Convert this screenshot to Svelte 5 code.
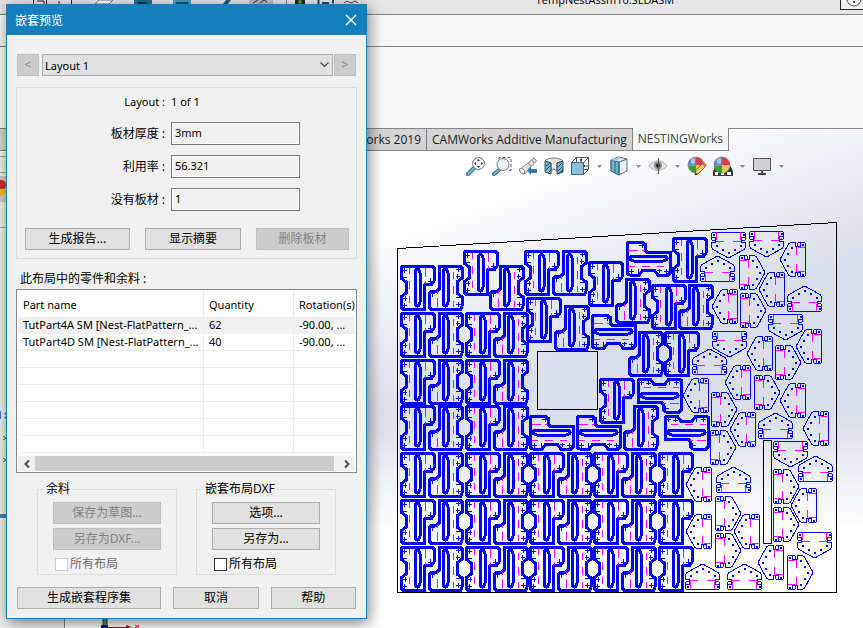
<script lang="ts">
    type Placement = { x: number, y: number, turn: number }

    let selected: string = $state('Layout 1')
    let allScrap: boolean = $state(false)
    let allDxf: boolean = $state(false)

    const parts = [
        { name: 'TutPart4A SM [Nest-FlatPattern_...', quantity: 62, rotation: '-90.00, ...' },
        { name: 'TutPart4D SM [Nest-FlatPattern_...', quantity: 40, rotation: '-90.00, ...' }
    ]
    const emptyRows = [1, 2, 3, 4, 5, 6]

    const place = (list: number[][]): Placement[] =>
        list.map(([x, y, turn]) => ({ x, y, turn }))

    // regular columns of brackets, two interlocked pieces per column
    const brackets: Placement[] = []
    for (const y of [312, 359, 405]) {
        for (const x of [400, 465]) {
            brackets.push({ x, y, turn: 0 }, { x: x + 28, y, turn: 180 })
        }
    }
    for (const y of [452, 499, 546]) {
        for (const x of [400, 465, 529, 593]) {
            brackets.push({ x, y, turn: 0 }, { x: x + 28, y, turn: 180 })
        }
        brackets.push({ x: 658, y, turn: 0 })
    }
    // the loose ones
    brackets.push(...place([
        [400, 265, 0], [428, 265, 180], [463, 250, 0], [489, 265, 180],
        [524, 250, 0], [552, 250, 180], [588, 261, 0], [615, 278, 180],
        [651, 284, 0], [678, 284, 180], [672, 237, 0], [526, 297, 0],
        [554, 305, 180], [591, 314, -90], [626, 241, -90], [628, 331, 180],
        [664, 331, 0], [599, 378, 0], [637, 378, 90], [623, 405, 180],
        [529, 415, -90], [576, 415, -90], [664, 415, 90]
    ]))

    const gussets: Placement[] = place([
        [711, 232, 0], [749, 231, 0], [768, 314, 0], [712, 331, 0],
        [773, 441, 0], [797, 532, 0],
        [700, 256, 180], [787, 286, 180], [692, 349, 180], [758, 413, 180],
        [798, 456, 180], [716, 467, 180], [685, 564, 180], [727, 564, 180],
        [780, 242, 90], [759, 272, 90], [712, 289, 90], [796, 329, 90],
        [747, 336, 90], [725, 365, 90], [683, 378, 90], [780, 383, 90],
        [730, 412, 90], [803, 411, 90], [686, 467, 90], [734, 514, 90],
        [686, 514, 90], [791, 488, 90], [758, 545, 90],
        [739, 255, -90], [740, 293, -90], [775, 345, -90], [754, 375, -90],
        [711, 392, -90], [710, 430, -90], [715, 496, -90], [715, 533, -90],
        [773, 469, -90], [773, 507, -90], [787, 555, -90]
    ])

    // x and y are the corner of the piece after it has been turned
    const move = (p: Placement, w: number, h: number) => {
        let dx = 0
        let dy = 0
        if (p.turn === 180) {
            dx = w
            dy = h
        }
        if (p.turn === 90) dx = h
        if (p.turn === -90) dy = w
        return `translate(${p.x + dx} ${p.y + dy}) rotate(${p.turn})`
    }
</script>

<svelte:head>
    <title>NESTINGWorks</title>
</svelte:head>

{#snippet arrow()}
    <button class="more" aria-label="more">
        <svg width="5" height="3" viewBox="0 0 5 3"><path d="M0 0h5L2.500 3z" fill="#8b8b8b" /></svg>
    </button>
{/snippet}

{#snippet ball()}
    <circle cx="9" cy="9" r="8" fill="#e9edf5" />
    <path d="M9 9V1a8 8 0 0 0-8 8c2 1 5 1 8 0z" fill="#5b8fd8" />
    <path d="M9 1a8 8 0 0 1 8 7.500c-2 1.500-5 1.500-8 .5z" fill="#dc3f43" />
    <path d="M1 9c2 1 5 1 8 0v8a8 8 0 0 1-8-8z" fill="#35a02c" />
    <path d="M9 9c3 1 6 1 8-.5A8 8 0 0 1 9 17z" fill="#f0c85a" />
    <ellipse cx="6" cy="5" rx="2" ry="3" fill="#c9dcf5" opacity=".7" />
    <circle cx="9" cy="9" r="8" fill="none" stroke="#6b7280" stroke-width=".6" />
{/snippet}

<main>
    <header class="titlebar">
        <svg class="tools" width="340" height="5" viewBox="30 0 340 5" aria-hidden="true">
            <path d="M33.500 0v4M46.500 0v4M37 1h7v3M59 4V1M71.500 0v4" stroke="#222" fill="none" />
            <path d="M95 4l4-4h14l-4 4z" fill="#fff" stroke="#777" />
            <path d="M134 0h18v4h-18z" fill="#1d6f96" />
            <path d="M138 2h9v2h-9z" fill="#183848" />
            <path d="M173 0h18v4h-18z" fill="#3c9cc4" />
            <path d="M176 2h12v2h-12z" fill="#165272" />
            <path d="M223 4l3-4h5l-3 4z" fill="#1d5f86" />
            <path d="M249 0h24v4h-24z" fill="#bdbdbd" />
            <path d="M253 3l5-3M260 3l4-3 3 2" stroke="#333" fill="none" />
            <path d="M286.500 0v4" stroke="#888" />
            <path d="M295 0h10v4h-10z" fill="#252525" />
            <circle cx="300" cy="2" r="2" fill="#39a935" />
            <path d="M318.500 0v4M333 3.500V0M322 3h7" stroke="#1b4c66" stroke-width="2" />
            <path d="M344 3l3-2 4 2 4-2 3 2" stroke="#444" fill="none" />
        </svg>
        <h1>TempNestAssm10.SLDASM</h1>
        <button class="help" aria-label="Help">
            <svg width="22" height="9" viewBox="0 0 22 9">
                <circle cx="13" cy="-1" r="7" fill="#ececec" stroke="#555" />
                <path d="M12 1h2v2h-2z" fill="#1b6b95" />
            </svg>
        </button>
    </header>
    <div class="band"></div>
    <div class="ribbon"></div>

    <section class="workspace">
        <nav class="tabs">
            <a class="first" href="#camworks">CAMWorks 2019</a>
            <a href="#additive">CAMWorks Additive Manufacturing</a>
            <a class="active" href="#nesting">NESTINGWorks</a>
        </nav>

        <div class="columns">
            <aside>
                <svg width="7" height="370" viewBox="0 151 7 370" aria-hidden="true">
                    <path d="M0 155.500h7M0 171.500h7M0 226.500h7" stroke="#aaa" />
                    <path d="M0 175h7v26H0z" fill="#cfcfcf" />
                    <circle cx="1" cy="184" r="5" fill="#d22b2b" />
                    <path d="M0 188h6a6 6 0 0 1-6 7z" fill="#ecc51d" />
                    <path d="M0 410h1v8H0z" fill="#2f86c9" />
                    <path d="M5 412h1v1H5zM5 416h1v1H5zM3 435l3 2-3 2M3 457l3 2-3 2" stroke="#555" fill="none" />
                    <path d="M0 513h7v4H0z" fill="#3d83b4" />
                </svg>
            </aside>

            <div class="view">
                <div class="hud">
                    <button aria-label="Zoom to fit">
                        <svg width="20" height="20" viewBox="0 0 20 20">
                            <path d="M2 18l6-6" stroke="#386f8d" stroke-width="4" stroke-linecap="round" />
                            <path d="M2 18l6-6" stroke="#7eb4d0" stroke-width="2" stroke-linecap="round" />
                            <circle cx="12.500" cy="7.500" r="6" fill="#f1f4f6" stroke="#6f7579" />
                            <path d="M12.500 3l1.500 2h-3zM12.500 12l1.500-2h-3zM8 7.500l2-1.500v3zM17 7.500l-2-1.500v3z" fill="#333" />
                        </svg>
                    </button>
                    <button aria-label="Zoom to area">
                        <svg width="20" height="20" viewBox="0 0 20 20">
                            <path d="M7 3V1.500h12v13h-3" fill="none" stroke="#555" stroke-dasharray="3 2" />
                            <path d="M2 18l5-4" stroke="#386f8d" stroke-width="4" stroke-linecap="round" />
                            <path d="M2 18l5-4" stroke="#7eb4d0" stroke-width="2" stroke-linecap="round" />
                            <circle cx="11" cy="8.500" r="6" fill="#e5edef" stroke="#777d80" />
                        </svg>
                    </button>
                    <button aria-label="Previous view">
                        <svg width="20" height="20" viewBox="0 0 20 20">
                            <path d="M2 13l8-6 6-5 2.500 3-5 5-6 7-3 1z" fill="#e2e2e2" stroke="#888" />
                            <path d="M10 7l3 3M14 4l2 3" stroke="#888" />
                            <ellipse cx="4" cy="15" rx="2" ry="3" fill="#fff" stroke="#888" transform="rotate(-40 4 15)" />
                            <path d="M9 14.500l4-4V13h6v4h-6v2z" fill="#2f7fa8" />
                        </svg>
                    </button>
                    <button aria-label="Section view">
                        <svg width="20" height="20" viewBox="0 0 20 20">
                            <path d="M1 5c3-4 14-4 18 0l-6 2v8l-3-2-3 2V7z" fill="#e3e5e7" stroke="#777" />
                            <path d="M1 5l6 2v11l-6-2zM13 7l6-2v11l-6 2z" fill="#7db9d6" stroke="#2b4d60" />
                            <path d="M2 10l4-3M2 14l4-4M4 17l3-3M14 11l4-4M14 15l4-4M15 17l4-3" stroke="#22465b" />
                        </svg>
                    </button>
                    <button aria-label="View orientation">
                        <svg width="20" height="20" viewBox="0 0 20 20">
                            <path d="M1.500 6.500l5-5h12v12l-5 5M6.500 1.500v5M13.500 6.500l5-5M13.500 13.500h5M11 1v5M14 10h5" fill="none" stroke="#555" />
                            <path d="M1.500 6.500h12v12h-12z" fill="#8bbdd6" stroke="#2e6a89" />
                            <path d="M10 3l1 2 1-2M15 9l-1 1 1 1" stroke="#333" fill="none" />
                        </svg>
                    </button>
                    {@render arrow()}
                    <button aria-label="Display style">
                        <svg width="20" height="20" viewBox="0 0 20 20">
                            <path d="M2 4l7-3 9 2v12l-8 4-8-4z" fill="#e8edf0" stroke="#6c7377" />
                            <path d="M2 4l8 2v13l-8-4z" fill="#6fb0d0" stroke="#35647c" />
                            <path d="M2 4l7-3 3 1-5 3z" fill="#9ccbe0" />
                            <path d="M6 5v12M10 6l8-3M10 6v13" stroke="#35647c" />
                        </svg>
                    </button>
                    {@render arrow()}
                    <button aria-label="Hide or show items">
                        <svg width="20" height="20" viewBox="0 0 20 20">
                            <path d="M1 10c5-7 13-7 18 0-5 6-13 6-18 0z" fill="#e4e4e4" stroke="#b2b2b2" />
                            <circle cx="10" cy="9.500" r="4" fill="#8a8a8a" />
                            <circle cx="10" cy="9.500" r="2" fill="#222" />
                            <path d="M10.500 2v16" stroke="#555" />
                        </svg>
                    </button>
                    {@render arrow()}
                    <button aria-label="Edit appearance">
                        <svg width="20" height="20" viewBox="0 0 20 20">
                            {@render ball()}
                            <path d="M8 19l1-5 7-7 3 3-7 7z" fill="#f0cf63" stroke="#6b5425" stroke-width=".8" />
                            <path d="M15 8l2-2 3 3-2 2z" fill="#d9655f" />
                            <path d="M8 19l.6-2.600 2 2z" fill="#222" />
                        </svg>
                    </button>
                    <button aria-label="Apply scene">
                        <svg width="20" height="20" viewBox="0 0 20 20">
                            <path d="M3 9h14l3 6v5H0v-5z" fill="#3c3c3c" />
                            <path d="M2 16h4v3H2zM8 16h4v3H8zM14 16h4v3h-4z" fill="#fff" />
                            {@render ball()}
                            <path d="M5 17h3v2H5zM11 17h3v2h-3z" fill="#3c3c3c" />
                        </svg>
                    </button>
                    {@render arrow()}
                    <button aria-label="View settings">
                        <svg width="20" height="20" viewBox="0 0 20 20">
                            <path d="M1.500 2.500h17v12h-17z" fill="#cfd1d4" stroke="#555" />
                            <path d="M9 15h2v2h3v2H6v-2h3z" fill="#444" />
                        </svg>
                    </button>
                    {@render arrow()}
                </div>

                <svg class="sheet" width="450" height="385" viewBox="390 215 450 385" role="img" aria-label="Sheet layout">
                    <defs>
                        <g id="bracket">
                            <path class="thick" d="M2 1H32L34 3V16L32 19H26L24 21V44H3L1 42V32L6 28V17L1 13V4Z" />
                            <path class="thick" d="M15 8Q15 5 17.500 4Q20 5 20 8V37Q20 40 17.500 41Q15 40 15 37Z" />
                            <path class="fine" d="M2 5.500h5M4.500 3v5M2 12.500h5M3 33.500h4M5.500 31v5M2 40.500h5M4.500 38v5M28 16.500h5M30.500 13v5" />
                            <path class="bend" d="M9.500 3v6M9.500 16v8M9.500 31v7M25.500 3v9M25.500 16v3" />
                        </g>
                        <g id="gusset">
                            <path class="bend" d="M5 9.500h8M22 9.500h8M5.500 1v7M29.500 1v7" />
                            <path class="fine" d="M1.500 .5H33.500L34.500 1.500V7.500L33.500 8.500H30.500V10.500H34.500V15.500L33 17.500L18.500 25.500H16.500L2 17.500L.5 15.500V10.500H4.500V8.500H1.500L.5 7.500V1.500Z" />
                            <path class="fine" d="M.5 5.500h4v3M34.500 5.500h-4v3M2 2.500h1v1h-1zM32 2.500h1v1h-1zM5 13.500h1v1h-1zM29 13.500h1v1h-1zM11 17.500h1v1h-1zM23 17.500h1v1h-1zM17 20.500h1v1h-1z" />
                        </g>
                    </defs>
                    <path class="edge" d="M397.500 248.500L836.500 222.500V592.500H397.500Z" />
                    <path class="edge" d="M537.500 351.500H597.500V409.500H537.500Z" />
                    <path class="edge" d="M763.500 440.500H771.500V543.500H763.500Z" />
                    {#each gussets as piece}
                        <use href="#gusset" transform={move(piece, 35, 26)} />
                    {/each}
                    {#each brackets as piece}
                        <use href="#bracket" transform={move(piece, 35, 45)} />
                    {/each}
                </svg>

                <svg class="triad" width="46" height="12" viewBox="98 616 46 12" aria-hidden="true">
                    <path d="M103 616h4v10h-4z" fill="#4f9a4f" stroke="#164d16" />
                    <path d="M107 627.500h22" stroke="#8d1a1a" />
                    <path d="M126 625l7 2.500h-7z" fill="#8d1a1a" />
                    <path d="M101 625h7v3h-7z" fill="#0a0a9c" />
                    <path d="M135 625l4 3M139 625l-4 3" stroke="#e00" />
                </svg>
            </div>
        </div>
    </section>

    <div class="dialog" role="dialog" aria-labelledby="dialog-title">
        <div class="caption">
            <h2 id="dialog-title">嵌套预览</h2>
            <button aria-label="Close">
                <svg width="12" height="12" viewBox="0 0 12 12"><path d="M1 1l10 10M11 1L1 11" stroke="#fff" stroke-width="1.400" /></svg>
            </button>
        </div>

        <div class="body">
            <div class="pager">
                <button disabled>&lt;</button>
                <div class="combo">
                    <select bind:value={selected} aria-label="Layout">
                        <option>Layout 1</option>
                    </select>
                    <svg width="9" height="6" viewBox="0 0 9 6" aria-hidden="true"><path d="M.5 .5l4 4 4-4" fill="none" stroke="#444" stroke-width="1.200" /></svg>
                </div>
                <button disabled>&gt;</button>
            </div>

            <div class="group">
                <div class="fields">
                    <span class="label">Layout :</span>
                    <span class="count">1 of 1</span>
                    <label class="label" for="thickness">板材厚度 :</label>
                    <input id="thickness" type="text" value="3mm" readonly />
                    <label class="label" for="usage">利用率 :</label>
                    <input id="usage" type="text" value="56.321" readonly />
                    <label class="label" for="sheets">没有板材 :</label>
                    <input id="sheets" type="text" value="1" readonly />
                </div>
                <div class="actions">
                    <button class="report">生成报告...</button>
                    <button class="summary">显示摘要</button>
                    <button class="remove" disabled>删除板材</button>
                </div>
            </div>

            <p class="heading">此布局中的零件和余料 :</p>
            <div class="list">
                <div class="rows">
                    <table>
                        <thead>
                            <tr>
                                <th class="name">Part name</th>
                                <th class="quantity">Quantity</th>
                                <th>Rotation(s)</th>
                            </tr>
                        </thead>
                        <tbody>
                            {#each parts as part, index}
                                <tr class:picked={index === 0}>
                                    <td>{part.name}</td>
                                    <td>{part.quantity}</td>
                                    <td>{part.rotation}</td>
                                </tr>
                            {/each}
                            {#each emptyRows as row}
                                <tr><td></td><td></td><td></td></tr>
                            {/each}
                        </tbody>
                    </table>
                </div>
                <div class="scroll">
                    <button aria-label="Scroll left">
                        <svg width="6" height="8" viewBox="0 0 6 8"><path d="M5 .5L1.500 4 5 7.500" fill="none" stroke="#505050" stroke-width="2" /></svg>
                    </button>
                    <div class="thumb"></div>
                    <button aria-label="Scroll right">
                        <svg width="6" height="8" viewBox="0 0 6 8"><path d="M1 .5L4.500 4 1 7.500" fill="none" stroke="#505050" stroke-width="2" /></svg>
                    </button>
                </div>
            </div>

            <div class="exports">
                <fieldset>
                    <legend>余料</legend>
                    <button disabled>保存为草图...</button>
                    <button disabled>另存为DXF...</button>
                    <label class="check off">
                        <input type="checkbox" bind:checked={allScrap} disabled />所有布局
                    </label>
                </fieldset>
                <fieldset>
                    <legend>嵌套布局DXF</legend>
                    <button>选项...</button>
                    <button>另存为...</button>
                    <label class="check">
                        <input type="checkbox" bind:checked={allDxf} />所有布局
                    </label>
                </fieldset>
            </div>

            <div class="footer">
                <button class="create">生成嵌套程序集</button>
                <button>取消</button>
                <button>帮助</button>
            </div>
        </div>
    </div>
</main>

<style>
    :global(body) {
        margin: 0;
    }
    main {
        position: relative;
        display: flex;
        flex-direction: column;
        min-height: 100vh;
        overflow: hidden;
        background: #f7f7f7;
        font-family: "Noto Sans", "Noto Sans CJK SC", sans-serif;
        font-size: 11px;
        color: #000;
    }
    button, input, select {
        font: inherit;
        color: inherit;
        box-sizing: border-box;
        margin: 0;
    }
    svg {
        display: block;
    }

    /* application window */
    .titlebar {
        display: flex;
        justify-content: space-between;
        align-items: flex-start;
        height: 14px;
        padding-left: 30px;
        overflow: hidden;
        background: #e6e6e6;
        border-bottom: 1px solid #848484;
    }
    h1 {
        margin: -8px 0 0;
        font: 11px/16px "Open Sans", sans-serif;
    }
    .help {
        padding: 0;
        border: 1px solid #222;
        border-width: 0 0 1px 1px;
        background: #f0f0f0;
    }
    .band {
        height: 31px;
        border-bottom: 1px solid #848484;
    }
    .ribbon {
        height: 81px;
    }
    .workspace {
        flex: 1;
        display: flex;
        flex-direction: column;
        background:
            linear-gradient(to bottom, rgba(255, 255, 255, 0) 57%, #fff 80%),
            linear-gradient(160deg, #fff 30%, #dadeea 54%);
    }
    .tabs {
        display: flex;
        height: 23px;
        border-top: 1px solid #848484;
    }
    .tabs a {
        box-sizing: border-box;
        height: 22px;
        padding: 0 5px;
        border-right: 1px solid #848484;
        border-bottom: 1px solid #848484;
        background: #d4d4d4;
        color: #1a1a1a;
        font: 12px/22px "Open Sans", sans-serif;
        text-decoration: none;
        white-space: nowrap;
    }
    .tabs .first {
        width: 427px;
        text-align: right;
    }
    .tabs .active {
        height: 23px;
        margin-top: -1px;
        background: #f7f7f7;
        color: #444;
    }
    .columns {
        flex: 1;
        display: flex;
    }
    aside {
        width: 64px;
        background: #f0f0f0;
        border-right: 1px solid #848484;
    }
    .view {
        flex: 1;
        display: flex;
        flex-direction: column;
        align-items: flex-end;
    }
    .hud {
        display: flex;
        align-items: center;
        gap: 6px;
        padding: 4px 78px 0 0;
    }
    .hud button {
        padding: 0;
        border: 0;
        background: none;
    }
    .hud .more {
        padding: 4px 1px;
    }
    .sheet {
        margin: 39px 23px 0 0;
    }
    .sheet path {
        fill: none;
        stroke-width: 1;
        shape-rendering: crispEdges;
    }
    .sheet .thick {
        stroke: #00f;
        stroke-width: 3;
    }
    .sheet .fine {
        stroke: #00f;
    }
    .sheet .bend {
        stroke: #f0f;
    }
    .sheet .edge {
        stroke: #000;
    }
    .triad {
        align-self: flex-start;
        margin: auto 0 0 33px;
    }

    /* dialog */
    .dialog {
        position: absolute;
        top: 4px;
        left: 6px;
        width: 359px;
        border: 1px solid #1a80bf;
        background: #f0f0f0;
        box-shadow: 2px 4px 14px rgba(0, 0, 0, 0.5);
    }
    .caption {
        display: flex;
        justify-content: space-between;
        align-items: center;
        height: 30px;
        padding: 0 9px 0 8px;
        background: #1680be;
        color: #fff;
    }
    h2 {
        margin: 0;
        font-size: 12px;
        font-weight: normal;
    }
    .caption button {
        padding: 0;
        border: 0;
        background: none;
    }
    .body {
        padding: 19px 9px 9px;
    }
    .body button {
        height: 22px;
        padding: 0;
        border: 1px solid #adadad;
        background: #e1e1e1;
        font-size: 12px;
        line-height: 20px;
        white-space: nowrap;
    }
    .body button:disabled {
        border-color: #bfbfbf;
        background: #ccc;
        color: #838383;
    }
    .pager {
        display: flex;
        padding: 0 1px;
    }
    .pager button {
        width: 22px;
    }
    .combo {
        flex: 1;
        display: grid;
        align-items: center;
        margin: 0 1px 0 3px;
    }
    .combo select {
        grid-area: 1 / 1;
        width: 100%;
        height: 22px;
        padding: 0 2px;
        appearance: none;
        border: 1px solid #adadad;
        border-radius: 0;
        background: #e1e1e1;
    }
    .combo svg {
        grid-area: 1 / 1;
        justify-self: end;
        margin-right: 4px;
        pointer-events: none;
    }
    .group {
        margin-top: 11px;
        padding: 4px 7px 8px 8px;
        border: 1px solid #dcdcdc;
    }
    .fields {
        display: grid;
        grid-template-columns: 140px 129px;
        column-gap: 6px;
        row-gap: 10px;
        align-items: center;
    }
    .label {
        text-align: right;
        font-size: 12px;
        line-height: 22px;
    }
    .fields span {
        font-size: 11px;
        line-height: 20px;
    }
    .fields input {
        height: 23px;
        padding: 0 3px 2px;
        border: 1px solid #7a7a7a;
        background: #f0f0f0;
        box-shadow: inset 0 0 0 1px #fff;
    }
    .actions {
        display: flex;
        gap: 15px;
        margin-top: 17px;
    }
    .report {
        flex: 105;
    }
    .summary {
        flex: 96;
    }
    .remove {
        flex: 93;
    }
    .heading {
        margin: 10px 4px 0;
        font-size: 12px;
        line-height: 20px;
    }
    .list {
        padding: 1px;
        border: 1px solid #828790;
        background: #fff;
    }
    .rows {
        height: 165px;
        overflow: hidden;
    }
    table {
        width: 100%;
        table-layout: fixed;
        border-collapse: separate;
        border-spacing: 0;
    }
    th, td {
        box-sizing: border-box;
        padding: 0 0 0 5px;
        border-right: 1px solid #ededed;
        text-align: left;
        font-weight: normal;
        white-space: nowrap;
    }
    th {
        height: 26px;
    }
    td {
        height: 17px;
        border-bottom: 1px solid #ededed;
        line-height: 16px;
    }
    th:last-child, td:last-child {
        border-right: 0;
    }
    .name {
        width: 186px;
    }
    .quantity {
        width: 90px;
    }
    .picked td {
        background: #f0f0f0;
    }
    .scroll {
        display: flex;
        height: 15px;
        background: #f0f0f0;
    }
    .scroll button {
        display: grid;
        place-content: center;
        width: 17px;
        height: 15px;
        border: 0;
        background: none;
    }
    .thumb {
        flex: 1;
        margin-right: 4px;
        background: #cdcdcd;
    }
    .exports {
        display: flex;
        gap: 19px;
        margin: 8px 21px 0;
    }
    fieldset {
        flex: 1;
        display: flex;
        flex-direction: column;
        gap: 4px;
        min-width: 0;
        margin: 0;
        padding: 5px 15px 0;
        border: 1px solid #dcdcdc;
        font-size: 12px;
    }
    legend {
        margin-left: -9px;
        padding: 0 2px;
        line-height: 16px;
    }
    .check {
        display: flex;
        align-items: center;
        gap: 2px;
        padding-left: 2px;
        line-height: 20px;
    }
    .check input {
        appearance: none;
        width: 13px;
        height: 13px;
        border: 1px solid #333;
        background: #fff;
    }
    .check input:checked {
        background: #1680be;
    }
    .off {
        color: #6d6d6d;
    }
    .off input {
        border-color: #ccc;
    }
    .footer {
        display: flex;
        gap: 12px;
        margin-top: 12px;
        padding: 0 1px;
    }
    .footer button {
        flex: 17;
    }
    .footer .create {
        flex: 29;
    }
</style>
